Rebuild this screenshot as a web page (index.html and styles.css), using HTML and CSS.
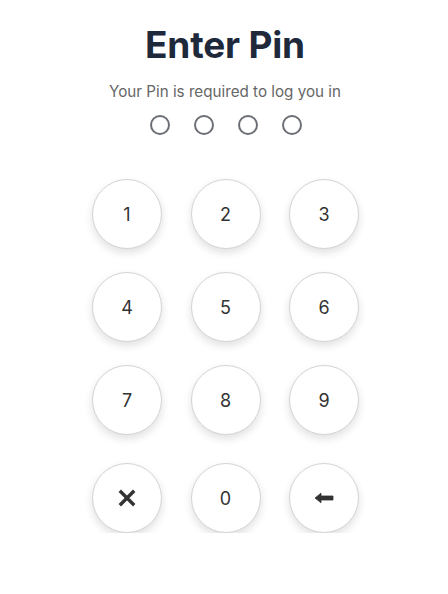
FILE: index.html
```html
<!DOCTYPE html>
<html>
<head>
<meta charset="utf-8">
<link rel="stylesheet" href="styles.css">
</head>
<body>
<main class="pin">
  <h1 class="title">Enter Pin</h1>
  <p class="subtitle">Your Pin is required to log you in</p>
  <div class="dots">
    <span class="dot"></span><span class="dot"></span><span class="dot"></span><span class="dot"></span>
  </div>
  <div class="keypad">
    <button class="key">1</button>
    <button class="key">2</button>
    <button class="key">3</button>
    <button class="key">4</button>
    <button class="key">5</button>
    <button class="key">6</button>
    <button class="key">7</button>
    <button class="key">8</button>
    <button class="key">9</button>
    <button class="key key-last" aria-label="Clear">
      <svg width="18" height="18" viewBox="0 0 18 18"><path d="M3 3L15 15M15 3L3 15" stroke="#333" stroke-width="3.4" stroke-linecap="square"/></svg>
    </button>
    <button class="key key-last">0</button>
    <button class="key key-last" aria-label="Backspace">
      <svg width="20" height="14" viewBox="0 0 20 14"><path d="M1 7L7 2.2V5H19V9H7V11.8Z" fill="#333" stroke="#333" stroke-width="0.8" stroke-linejoin="round"/></svg>
    </button>
  </div>
</main>
</body>
</html>
```
FILE: styles.css
```css
* { box-sizing: border-box; }
html, body { margin: 0; padding: 0; background: #fff; }
body { font-family: Inter, "Noto Sans", sans-serif; }
.pin {
  display: flex;
  flex-direction: column;
  align-items: center;
  padding-top: 22px;
}
.title {
  margin: 0 0 0 2px;
  font-size: 37px;
  line-height: 46px;
  font-weight: 700;
  color: #1e293b;
  letter-spacing: -0.2px;
}
.subtitle {
  margin: 14px 0 0 2px;
  font-size: 15.2px;
  line-height: 20px;
  color: #666;
}
.dots {
  display: flex;
  gap: 24px;
  margin: 13px 0 0 4px;
}
.dot {
  width: 20px;
  height: 20px;
  border: 2px solid #6b6f75;
  border-radius: 50%;
}
.keypad {
  display: grid;
  grid-template-columns: repeat(3, 70px);
  column-gap: 28.5px;
  row-gap: 23px;
  margin-top: 44px;
  margin-left: 3px;
}
.key {
  width: 70px;
  height: 70px;
  border-radius: 50%;
  border: 1px solid #d4d4d4;
  background: #fff;
  box-shadow: 0 4px 8px rgba(0,0,0,0.12);
  font-family: Inter, "Noto Sans", sans-serif;
  font-size: 18px;
  color: #333;
  display: flex;
  align-items: center;
  justify-content: center;
  padding: 0;
}
.key-last { margin-top: 5px; }
```
